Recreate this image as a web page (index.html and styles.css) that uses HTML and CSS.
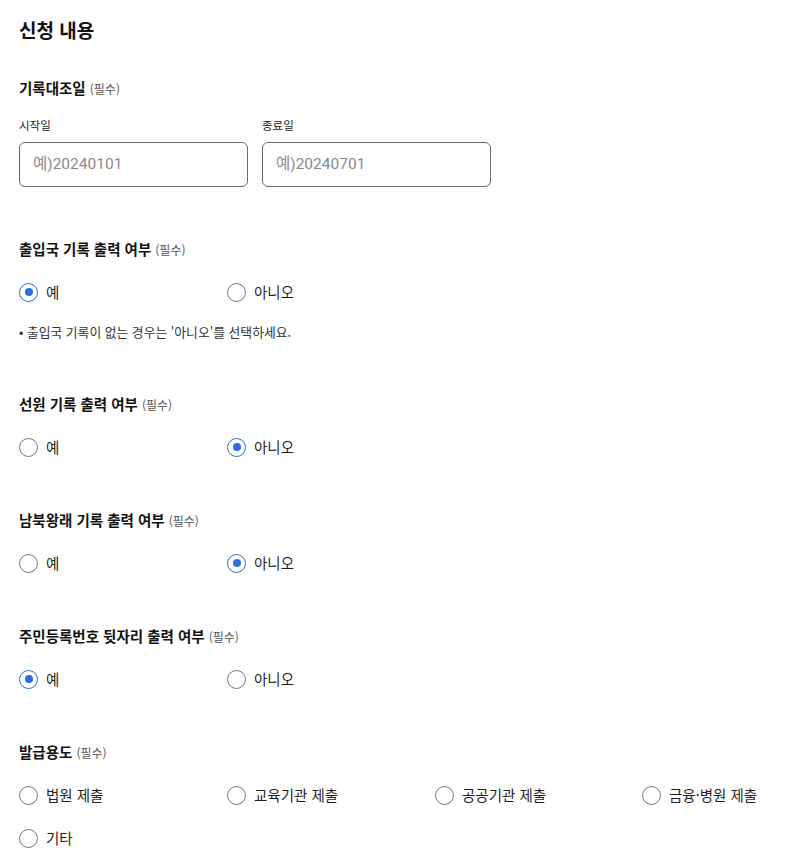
FILE: index.html
```html
<!DOCTYPE html>
<html lang="ko">
<head>
<meta charset="utf-8">
<link rel="stylesheet" href="styles.css">
</head>
<body>
<div class="page">
  <h1 class="title">신청 내용</h1>

  <section class="field field-date">
    <div class="label">기록대조일 <span class="req">(필수)</span></div>
    <div class="dates">
      <div class="date">
        <div class="sub">시작일</div>
        <div class="input">예)20240101</div>
      </div>
      <div class="date">
        <div class="sub">종료일</div>
        <div class="input">예)20240701</div>
      </div>
    </div>
  </section>

  <section class="field">
    <div class="label">출입국 기록 출력 여부 <span class="req">(필수)</span></div>
    <div class="radios">
      <div class="radio"><span class="dot on"></span>예</div>
      <div class="radio"><span class="dot"></span>아니오</div>
    </div>
    <div class="note">• 출입국 기록이 없는 경우는 '아니오'를 선택하세요.</div>
  </section>

  <section class="field">
    <div class="label">선원 기록 출력 여부 <span class="req">(필수)</span></div>
    <div class="radios">
      <div class="radio"><span class="dot"></span>예</div>
      <div class="radio"><span class="dot on"></span>아니오</div>
    </div>
  </section>

  <section class="field">
    <div class="label">남북왕래 기록 출력 여부 <span class="req">(필수)</span></div>
    <div class="radios">
      <div class="radio"><span class="dot"></span>예</div>
      <div class="radio"><span class="dot on"></span>아니오</div>
    </div>
  </section>

  <section class="field">
    <div class="label">주민등록번호 뒷자리 출력 여부 <span class="req">(필수)</span></div>
    <div class="radios">
      <div class="radio"><span class="dot on"></span>예</div>
      <div class="radio"><span class="dot"></span>아니오</div>
    </div>
  </section>

  <section class="field">
    <div class="label">발급용도 <span class="req">(필수)</span></div>
    <div class="radios">
      <div class="radio"><span class="dot"></span>법원 제출</div>
      <div class="radio"><span class="dot"></span>교육기관 제출</div>
      <div class="radio"><span class="dot"></span>공공기관 제출</div>
      <div class="radio"><span class="dot"></span>금융·병원 제출</div>
      <div class="radio"><span class="dot"></span>기타</div>
    </div>
  </section>
</div>
</body>
</html>
```
FILE: styles.css
```css
* { box-sizing: border-box; }
body {
  margin: 0;
  background: #fff;
  color: #1a1a1a;
  font-family: "Noto Sans CJK KR", "Noto Sans", sans-serif;
}
.page {
  padding: 16px 0 0 19px;
}
.title {
  margin: 0;
  font-size: 19px;
  font-weight: 700;
  line-height: 28px;
  color: #111;
}
.field {
  margin-top: 53px;
}
.field-date {
  margin-top: 34px;
}
.field-date + .field {
  margin-top: 52px;
}
.label {
  font-size: 14.5px;
  font-weight: 700;
  line-height: 20px;
  color: #111;
}
.req {
  font-size: 12px;
  font-weight: 400;
  color: #555;
}
.dates {
  display: flex;
  gap: 14px;
  margin-top: 18px;
}
.date { width: 229px; }
.sub {
  font-size: 11.5px;
  line-height: 16px;
  color: #222;
}
.input {
  margin-top: 9px;
  height: 45px;
  border: 1px solid #6a6a6a;
  border-radius: 6px;
  padding: 0 13px;
  font-size: 15.5px;
  line-height: 43px;
  color: #8a8a8a;
  font-family: "Roboto", "Noto Sans CJK KR", sans-serif;
}
.radios {
  display: grid;
  grid-template-columns: 208px 208px 207px 1fr;
  row-gap: 23px;
  margin-top: 22px;
}
.radio {
  display: flex;
  align-items: center;
  gap: 8px;
  font-size: 14.5px;
  line-height: 20px;
  color: #1f1f1f;
  white-space: nowrap;
}
.dot {
  width: 19px;
  height: 19px;
  border: 1.5px solid #777;
  border-radius: 50%;
  flex: none;
  position: relative;
}
.dot.on {
  border-color: #2b6ee0;
}
.dot.on::after {
  content: "";
  position: absolute;
  left: 50%;
  top: 50%;
  width: 8px;
  height: 8px;
  margin: -4px 0 0 -4px;
  border-radius: 50%;
  background: #2b6ee0;
}
.note {
  margin-top: 21px;
  font-size: 12.8px;
  line-height: 18px;
  color: #333;
}
```
